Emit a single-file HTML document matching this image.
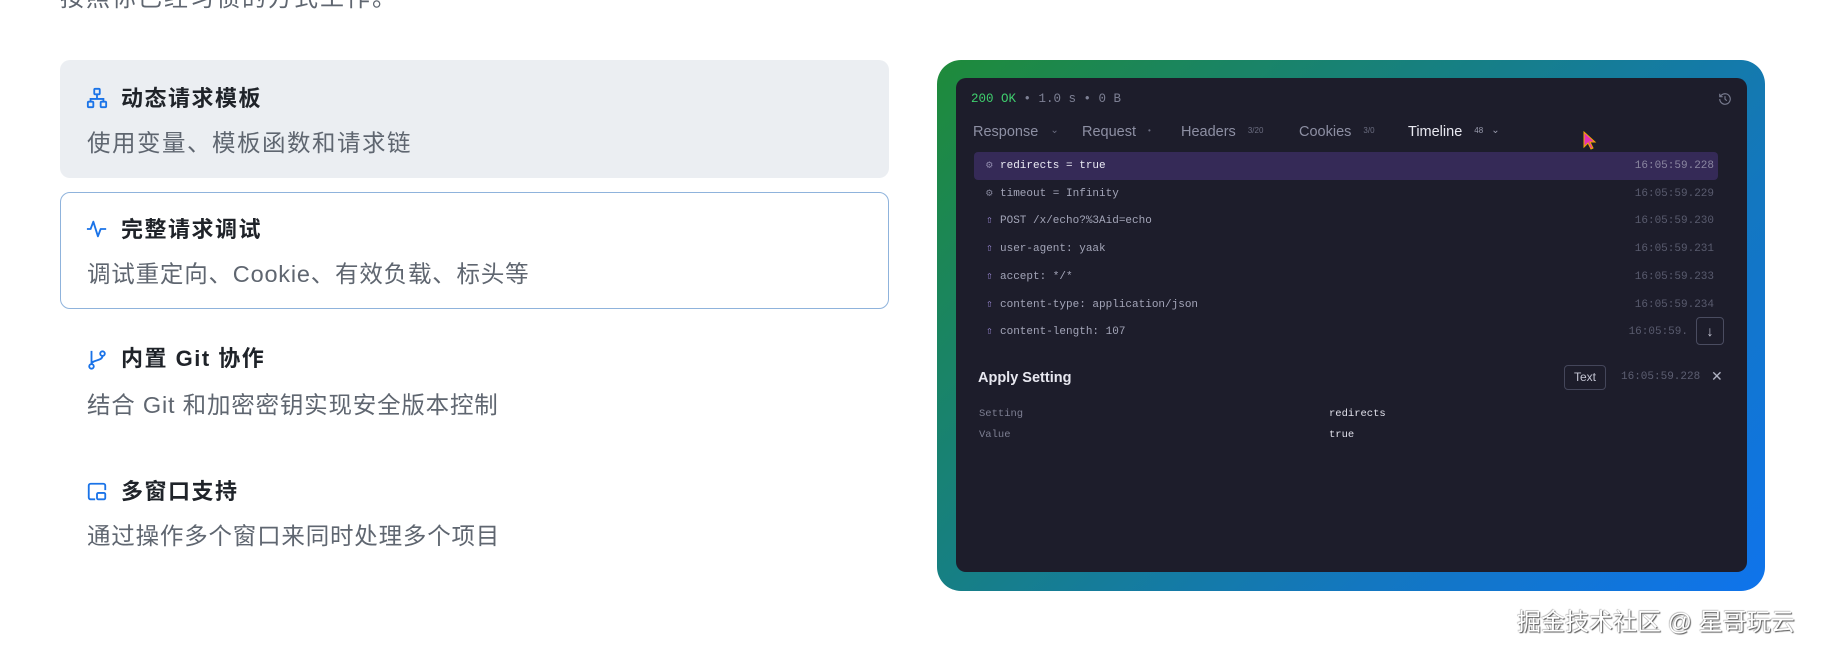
<!DOCTYPE html>
<html><head><meta charset="utf-8"><style>
*{margin:0;padding:0;box-sizing:border-box}
body{width:1823px;height:658px;background:#fff;position:relative;overflow:hidden;font-family:"Liberation Sans","Noto Sans CJK SC",sans-serif}
.abs{position:absolute;white-space:nowrap}
.card{position:absolute;left:60px;width:829px;height:118px;border-radius:10px}
.t{position:absolute;left:121px;font-size:22px;font-weight:700;color:#1f2329;line-height:30px;letter-spacing:1.5px}
.d{position:absolute;left:87px;font-size:23.5px;color:#5f6670;line-height:30px;letter-spacing:0.8px}
.ic{position:absolute;left:86px}
.frame{position:absolute;left:937px;top:60px;width:828px;height:531px;border-radius:24px;background:linear-gradient(135deg,#1f8b3a 0%,#167f86 40%,#1377c0 70%,#0f74ec 100%)}
.panel{position:absolute;left:956px;top:78px;width:791px;height:494px;border-radius:10px;background:#1d1d2b}
.mono{font-family:"Liberation Mono","DejaVu Sans Mono",monospace}
.tab{position:absolute;top:121px;font-size:14.5px;color:#8d8fa3;line-height:20px}
.sm{font-size:8px;color:#6b6d80;margin-left:8px;vertical-align:3px}
.row{position:absolute;left:974px;width:744px;height:28px;font-size:11px;line-height:28px;color:#a3a5b8}
.row .i{position:absolute;left:12px;color:#9d8bd8}
.row .x{position:absolute;left:26px}
.row .tm{position:absolute;right:4px;color:#595b6e}
</style></head><body>
<div class="abs" style="left:60px;top:-22px;font-size:24px;color:#5f6670;letter-spacing:2px">按照你已经习惯的方式工作。</div>

<div class="card" style="top:60px;background:#ebeef2"></div>
<div class="card" style="top:192px;height:117px;border:1px solid #8fb3dc;background:#fff"></div>

<svg class="ic" style="top:87px" width="22" height="22" viewBox="0 0 24 24" fill="none" stroke="#1a73e8" stroke-width="2"><rect x="9" y="2" width="6" height="6" rx="1"/><rect x="2" y="16" width="6" height="6" rx="1"/><rect x="16" y="16" width="6" height="6" rx="1"/><path d="M5 16v-3h14v3M12 8v5"/></svg>
<div class="t" style="top:84px">动态请求模板</div>
<div class="d" style="top:128px;letter-spacing:1.5px">使用变量、模板函数和请求链</div>

<svg class="ic" style="top:218px" width="22" height="22" viewBox="0 0 24 24" fill="none" stroke="#1a73e8" stroke-width="2" stroke-linejoin="round"><path d="M1 12h4l3-8 5 16 3-8h6"/></svg>
<div class="t" style="top:215px">完整请求调试</div>
<div class="d" style="top:259px">调试重定向、Cookie、有效负载、标头等</div>

<svg class="ic" style="top:349px" width="22" height="22" viewBox="0 0 24 24" fill="none" stroke="#1a73e8" stroke-width="2"><circle cx="6" cy="19" r="2.5"/><circle cx="18" cy="5" r="2.5"/><path d="M6 2v14.5M18 7.5c0 6-12 4-12 9"/></svg>
<div class="t" style="top:344px">内置 Git 协作</div>
<div class="d" style="top:390px">结合 Git 和加密密钥实现安全版本控制</div>

<svg class="ic" style="top:481px" width="22" height="22" viewBox="0 0 24 24" fill="none" stroke="#1a73e8" stroke-width="2"><path d="M10 20H5a2 2 0 0 1-2-2V5a2 2 0 0 1 2-2h14a2 2 0 0 1 2 2v5"/><rect x="12" y="13" width="9" height="7" rx="1.5"/></svg>
<div class="t" style="top:477px">多窗口支持</div>
<div class="d" style="top:521px">通过操作多个窗口来同时处理多个项目</div>

<div class="frame"></div>
<div class="panel"></div>
<div class="abs mono" style="left:971px;top:90px;font-size:12.5px;color:#7d8094;line-height:18px"><span style="color:#3fcf6e">200 OK</span> • 1.0 s • 0 B</div>
<svg class="abs" style="left:1718px;top:92px" width="14" height="14" viewBox="0 0 24 24" fill="none" stroke="#777a8e" stroke-width="2"><path d="M3 12a9 9 0 1 0 3-6.7L3 8M3 3v5h5M12 7v5l3 3"/></svg>

<div class="tab" style="left:973px">Response <span class="sm" style="font-size:10px">⌄</span></div>
<div class="tab" style="left:1082px">Request <span class="sm">•</span></div>
<div class="tab" style="left:1181px">Headers <span class="sm">3/20</span></div>
<div class="tab" style="left:1299px">Cookies <span class="sm">3/0</span></div>
<div class="tab" style="left:1408px;color:#e8e8f0">Timeline <span class="sm" style="color:#9a9cae">48</span> <span class="sm" style="color:#9a9cae;font-size:10px;margin-left:4px">⌄</span></div>
<svg class="abs" style="left:1583px;top:131px" width="14" height="20" viewBox="0 0 14 20"><path d="M1 1v15l4-4 3 6 2-1-3-6h5z" fill="#e52fb4" stroke="#f2a900" stroke-width="1"/></svg>

<div class="row mono" style="top:152px;background:#352a57;border-radius:4px;color:#ececf5"><span class="i" style="color:#8b85a8">⚙</span><span class="x">redirects = true</span><span class="tm" style="color:#8a86a0">16:05:59.228</span></div>
<div class="row mono" style="top:180px"><span class="i" style="color:#7e7f94">⚙</span><span class="x">timeout = Infinity</span><span class="tm">16:05:59.229</span></div>
<div class="row mono" style="top:207px"><span class="i">⇧</span><span class="x">POST /x/echo?%3Aid=echo</span><span class="tm">16:05:59.230</span></div>
<div class="row mono" style="top:235px"><span class="i">⇧</span><span class="x">user-agent: yaak</span><span class="tm">16:05:59.231</span></div>
<div class="row mono" style="top:263px"><span class="i">⇧</span><span class="x">accept: */*</span><span class="tm">16:05:59.233</span></div>
<div class="row mono" style="top:291px"><span class="i">⇧</span><span class="x">content-type: application/json</span><span class="tm">16:05:59.234</span></div>
<div class="row mono" style="top:318px"><span class="i">⇧</span><span class="x">content-length: 107</span><span class="tm" style="right:30px">16:05:59.</span></div>
<div class="abs" style="left:1696px;top:317px;width:28px;height:28px;border:1px solid #4a4c60;border-radius:4px;color:#c8c9d6;font-size:14px;text-align:center;line-height:26px;background:#1d1d2b">↓</div>

<div class="abs" style="left:978px;top:368px;font-size:14.5px;font-weight:700;color:#e8e8f0;line-height:20px">Apply Setting</div>
<div class="abs" style="left:1564px;top:365px;width:42px;height:25px;border:1px solid #44465a;border-radius:4px;color:#c4c5d3;font-size:12px;text-align:center;line-height:23px">Text</div>
<div class="abs mono" style="left:1621px;top:369px;font-size:11px;color:#5d5f72;line-height:16px">16:05:59.228</div>
<div class="abs" style="left:1711px;top:368px;font-size:14px;color:#b0b2c2;line-height:16px">✕</div>
<div class="abs mono" style="left:979px;top:406px;font-size:10.5px;color:#7d7f92;line-height:16px">Setting</div>
<div class="abs mono" style="left:979px;top:427px;font-size:10.5px;color:#7d7f92;line-height:16px">Value</div>
<div class="abs mono" style="left:1329px;top:406px;font-size:10.5px;color:#e0e0ea;line-height:16px">redirects</div>
<div class="abs mono" style="left:1329px;top:427px;font-size:10.5px;color:#e0e0ea;line-height:16px">true</div>

<div class="abs" style="left:1517px;top:608px;font-size:24px;line-height:30px;color:#fff;text-shadow:1px 1px 1px #555,-0.5px -0.5px 1px #999">掘金技术社区 @ 星哥玩云</div>
</body></html>
